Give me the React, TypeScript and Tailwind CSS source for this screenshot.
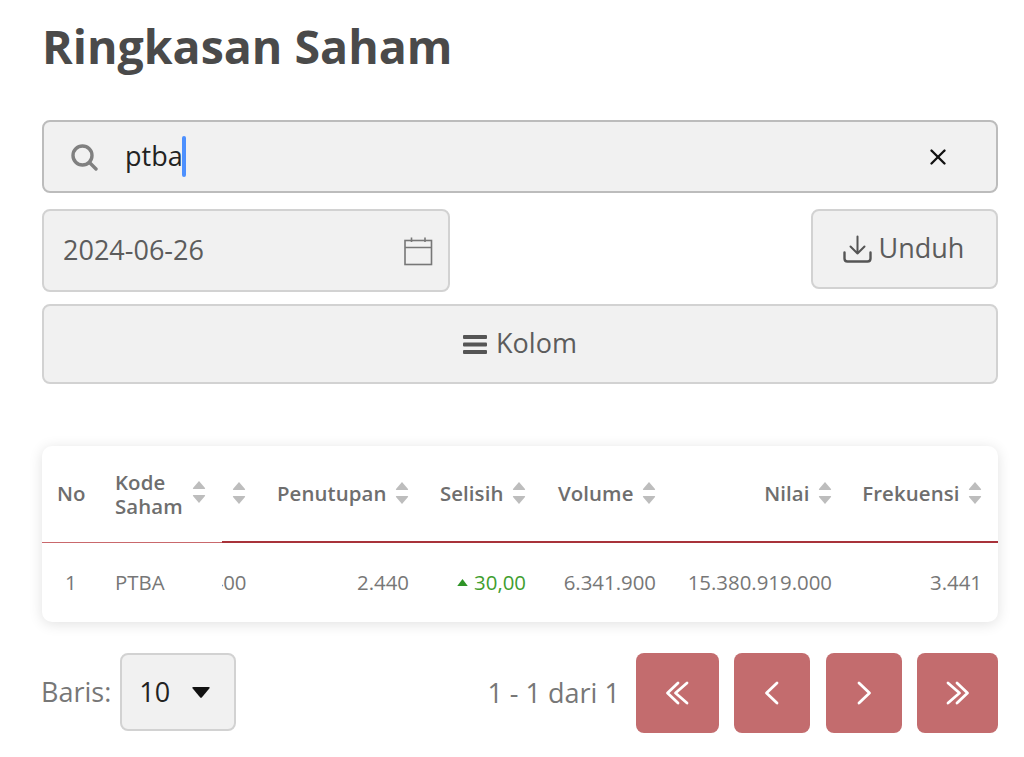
import { X } from "lucide-react";

const font = { fontFamily: '"Open Sans", sans-serif' };

function SortIcon() {
  return (
    <svg viewBox="0 0 14 24" className="h-[24px] w-[14px] shrink-0" fill="#bdbdbd">
      <path d="M7 1 L13 8 Q13.5 9 12.5 9 H1.5 Q0.5 9 1 8 Z" />
      <path d="M7 23 L13 16 Q13.5 15 12.5 15 H1.5 Q0.5 15 1 16 Z" />
    </svg>
  );
}

function HeadCell({ label, pad = "pr-[16px]", labelClass = "" }: { label: string; pad?: string; labelClass?: string }) {
  return (
    <th className="overflow-hidden border-b-2 border-[#a8323a] p-0 align-middle font-[550]">
      <div className={`flex items-center justify-end gap-[8.5px] overflow-hidden ${pad}`}>
        <span className={`whitespace-nowrap ${labelClass}`}>{label}</span>
        <SortIcon />
      </div>
    </th>
  );
}

function ValueCell({ children, className = "pr-[16px]" }: { children: React.ReactNode; className?: string }) {
  return (
    <td className="overflow-hidden p-0">
      <div className={`flex items-center justify-end overflow-hidden whitespace-nowrap ${className}`}>{children}</div>
    </td>
  );
}

function PageButton({ width, children }: { width: string; children: React.ReactNode }) {
  return (
    <button type="button" className={`flex h-[80px] items-center justify-center rounded-[8px] bg-[#c36c6e] text-white ${width}`}>
      {children}
    </button>
  );
}

function Chevron({ double, flip }: { double?: boolean; flip?: boolean }) {
  return (
    <svg
      viewBox="0 0 24 24"
      className={`h-[24px] w-[24px] ${flip ? "-scale-x-100" : ""}`}
      fill="none"
      stroke="currentColor"
      strokeWidth="2.8"
      strokeLinecap="round"
      strokeLinejoin="round"
    >
      {double ? (
        <path d="M13 2 L2.5 12 L13 22 M22 2 L10.5 12 L22 22" />
      ) : (
        <path d="M17 2 L6.5 12 L17 22" />
      )}
    </svg>
  );
}

export default function App() {
  return (
    <div style={font} className="h-[757px] w-[1024px] overflow-hidden bg-white pl-[42px] pr-[26px] text-[#555]">
      <h1 className="h-[120px] pt-[16px] text-[46.5px] font-bold leading-[60px] text-[#4a4a4a]">Ringkasan Saham</h1>

      {/* Search */}
      <div className="flex h-[73px] items-center rounded-[8px] border-2 border-[#bcbcbc] bg-[#f1f1f1] pl-[26px] pr-[45px]">
        <svg viewBox="0 0 28 28" className="h-[28px] w-[28px] shrink-0" fill="none" stroke="#808080" strokeWidth="3.4">
          <circle cx="12.5" cy="12.5" r="9.5" />
          <path d="M19.5 19.5 L26 26" strokeLinecap="round" />
        </svg>
        <span className="-mt-[2px] ml-[27px] text-[27px] leading-none text-[#222]">ptba</span>
        <span className="-ml-px h-[41px] w-[4px] rounded-[2px] bg-[#4d90fe]" />
        <X className="ml-auto h-[26px] w-[26px] text-[#111]" strokeWidth={2.2} />
      </div>

      {/* Date + download */}
      <div className="mt-[16px] flex items-start justify-between">
        <div className="flex h-[83px] w-[408px] items-center justify-between rounded-[8px] border-2 border-[#d2d2d2] bg-[#f1f1f1] pl-[19px] pr-[15px] text-[27px] text-[#5c5c5c]">
          <span>2024-06-26</span>
          <svg viewBox="0 0 30 30" className="h-[30px] w-[30px]" fill="none" stroke="#777" strokeWidth="1.6">
            <rect x="2" y="4.5" width="26.5" height="24" />
            <path d="M2 11.5 H28.5 M8.5 1.5 V6 M22 1.5 V6" />
          </svg>
        </div>
        <button type="button" className="flex h-[80px] w-[187px] items-center justify-center gap-[7px] rounded-[8px] border-2 border-[#d2d2d2] bg-[#f1f1f1] pb-[2px] pr-[2px] text-[27px] text-[#5c5c5c]">
          <svg viewBox="0 0 29 28" className="mt-[2px] h-[28px] w-[29px]" fill="none" stroke="#555" strokeWidth="2" strokeLinecap="round" strokeLinejoin="round">
            <path d="M14.5 1.5 V18.5 M7.5 11.5 L14.5 18.5 L21.5 11.5" />
            <path d="M1.5 17.5 V23.5 Q1.5 26.5 4.5 26.5 H24.5 Q27.5 26.5 27.5 23.5 V17.5" strokeWidth="2.4" />
          </svg>
          <span>Unduh</span>
        </button>
      </div>

      {/* Columns */}
      <button type="button" className="mt-[12px] flex h-[80px] w-full items-center justify-center gap-[9px] rounded-[8px] border-2 border-[#d2d2d2] bg-[#f1f1f1] pb-[2px] text-[27px] text-[#5c5c5c]">
        <svg viewBox="0 0 24 20" className="mt-[2px] h-[21px] w-[24px]" fill="#555">
          <rect x="0" y="0.5" width="24" height="4" rx="1" />
          <rect x="0" y="8" width="24" height="4" rx="1" />
          <rect x="0" y="15.5" width="24" height="4" rx="1" />
        </svg>
        <span>Kolom</span>
      </button>

      {/* Table */}
      <div className="mt-[62px] h-[176px] overflow-hidden rounded-[10px] bg-white shadow-[0_2px_14px_rgba(0,0,0,0.12)]">
        <table className="w-[956px] table-fixed border-separate border-spacing-0 text-[20.4px]">
          <colgroup>
            <col className="w-[58px]" />
            <col className="w-[122px]" />
            <col className="w-[39px]" />
            <col className="w-[164px]" />
            <col className="w-[117px]" />
            <col className="w-[130px]" />
            <col className="w-[176px]" />
            <col className="w-[150px]" />
          </colgroup>
          <thead>
            <tr className="h-[97px] text-[20.4px] tracking-[0.1px] text-[#6e6e6e]">
              <th className="border-b border-[#c9686c] pb-[2px] pl-[15px] text-left font-[550]">No</th>
              <th className="border-b border-[#c9686c] p-0 font-[550]">
                <div className="flex items-center gap-[9px] pl-[15px] text-left leading-[24px]">
                  <span className="w-[68px]">Kode Saham</span>
                  <span className="-mt-[4px]">
                    <SortIcon />
                  </span>
                </div>
              </th>
              <HeadCell label="Pembukaan" pad="pr-[15px]" labelClass="mr-[4px]" />
              <HeadCell label="Penutupan" />
              <HeadCell label="Selisih" />
              <HeadCell label="Volume" />
              <HeadCell label="Nilai" />
              <HeadCell label="Frekuensi" />
            </tr>
          </thead>
          <tbody>
            <tr className="h-[79px] text-[#777]">
              <td className="pl-[23px]">1</td>
              <td className="pl-[15px]">PTBA</td>
              <ValueCell className="pr-[14.5px]">2.400</ValueCell>
              <ValueCell>2.440</ValueCell>
              <ValueCell className="gap-[5px] pr-[16px] text-[#3f9e2f]">
                <svg viewBox="0 0 12 8" className="h-[7px] w-[13px]" fill="#2f9427">
                  <path d="M6 0 L12 8 H0 Z" />
                </svg>
                <span>30,00</span>
              </ValueCell>
              <ValueCell>6.341.900</ValueCell>
              <ValueCell>15.380.919.000</ValueCell>
              <ValueCell>3.441</ValueCell>
            </tr>
          </tbody>
        </table>
      </div>

      {/* Pagination */}
      <div className="mt-[31px] flex items-start">
        <div className="-ml-px flex h-[78px] items-center text-[27px] text-[#777]">Baris:</div>
        <div className="ml-[9px] flex h-[78px] w-[116px] items-center justify-between rounded-[8px] border-2 border-[#d2d2d2] bg-[#f1f1f1] pl-[17px] pr-[24px] text-[27px] text-[#222]">
          <span>10</span>
          <svg viewBox="0 0 18 11" className="h-[11px] w-[18px]" fill="#111">
            <path d="M1.5 0 H16.5 Q18.5 0 17.3 1.6 L10 10.2 Q9 11.2 8 10.2 L0.7 1.6 Q-0.5 0 1.5 0 Z" />
          </svg>
        </div>
        <div className="ml-auto flex h-[80px] items-center text-[27px] text-[#777]">1 - 1 dari 1</div>
        <div className="ml-[16px] flex gap-[15.4px]">
          <PageButton width="w-[83px]"><Chevron double /></PageButton>
          <PageButton width="w-[76px]"><Chevron /></PageButton>
          <PageButton width="w-[76px]"><Chevron flip /></PageButton>
          <PageButton width="w-[81px]"><Chevron double flip /></PageButton>
        </div>
      </div>
    </div>
  );
}
